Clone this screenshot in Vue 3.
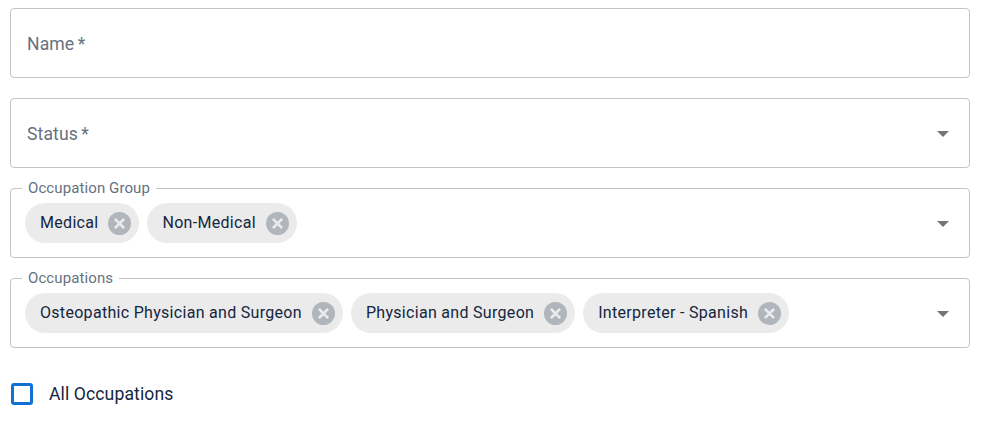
<template>
  <form class="form">
    <div class="field">
      <span class="placeholder">Name *</span>
    </div>
    <div class="field">
      <span class="placeholder">Status *</span>
      <span class="arrow"></span>
    </div>
    <div v-for="group in groups" :key="group.label" class="field">
      <span class="legend">{{ group.label }}</span>
      <div class="chips">
        <span v-for="chip in group.chips" :key="chip" class="chip">
          <span class="chip-label">{{ chip }}</span>
          <svg class="chip-remove" viewBox="0 0 24 24" width="23" height="23">
            <circle cx="12" cy="12" r="12" fill="#b1b5bc" />
            <path d="M7.2 7.2l9.6 9.6M16.8 7.2l-9.6 9.6" stroke="#ebebeb" stroke-width="2.8" fill="none" />
          </svg>
        </span>
      </div>
      <span class="arrow"></span>
    </div>
    <label class="check">
      <span class="box"></span>
      <span class="check-label">All Occupations</span>
    </label>
  </form>
</template>

<script setup>
const groups = [
  { label: 'Occupation Group', chips: ['Medical', 'Non-Medical'] },
  { label: 'Occupations', chips: ['Osteopathic Physician and Surgeon', 'Physician and Surgeon', 'Interpreter - Spanish'] },
]
</script>

<style>
body {
  background: #ffffff;
}
</style>

<style scoped>
.form {
  width: 960px;
  padding: 8px 0 0 10px;
  display: flex;
  flex-direction: column;
  gap: 20px;
  font-family: Roboto, "Liberation Sans", sans-serif;
}

.field {
  position: relative;
  box-sizing: border-box;
  height: 70px;
  padding: 0 20px 0 14px;
  border: 1px solid #c4c4c4;
  border-radius: 4px;
  display: flex;
  align-items: center;
  justify-content: space-between;
}

.placeholder {
  margin-left: 2px;
  padding-top: 2px;
  font-size: 17.6px;
  letter-spacing: 0.1px;
  word-spacing: -1px;
  color: #66717f;
}

.legend {
  position: absolute;
  top: -9px;
  left: 11px;
  padding: 0 6px;
  background: #ffffff;
  font-size: 15px;
  line-height: 17px;
  letter-spacing: 0.1px;
  color: #66717f;
}

.arrow {
  margin-left: auto;
  margin-top: 1px;
  width: 0;
  height: 0;
  border-left: 6px solid transparent;
  border-right: 6px solid transparent;
  border-top: 6px solid #757575;
}

.chips {
  display: flex;
  gap: 8px;
}

.chip {
  height: 40px;
  padding: 0 8px 0 15px;
  border-radius: 20px;
  background: #ebebeb;
  display: flex;
  align-items: center;
  gap: 10px;
}

.chip-label {
  padding-bottom: 2px;
  font-size: 16px;
  letter-spacing: 0.3px;
  color: #14263f;
}

.chip-remove {
  display: block;
  flex: none;
}

.check {
  margin-top: 14px;
  display: flex;
  align-items: center;
  gap: 16px;
  height: 24px;
  padding-left: 1px;
}

.box {
  box-sizing: border-box;
  width: 22px;
  height: 22px;
  border: 3px solid #1170d4;
  border-radius: 3px;
}

.check-label {
  font-size: 17.6px;
  letter-spacing: 0.1px;
  color: #14263f;
}
</style>
